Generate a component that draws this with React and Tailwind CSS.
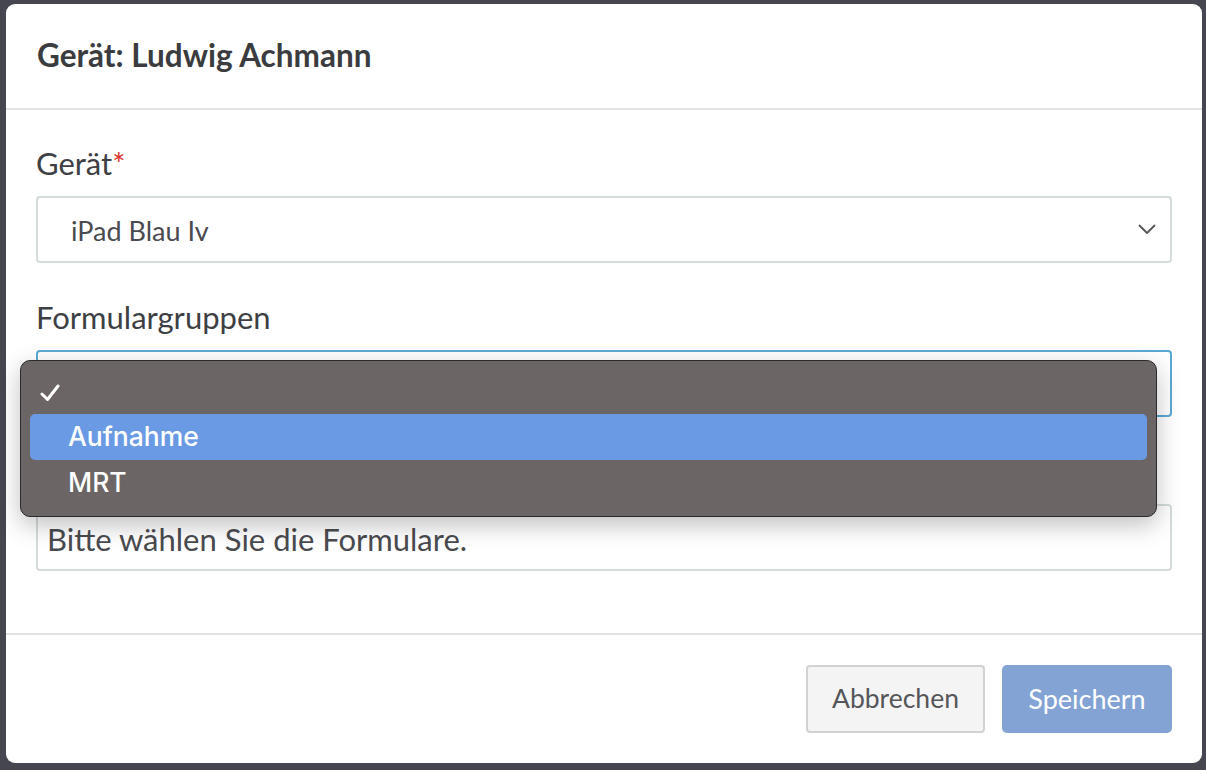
import React from "react";

const font = { fontFamily: '"Lato", "Noto Sans", sans-serif' };

function Chevron() {
  return (
    <svg width="18" height="11" viewBox="0 0 18 11" fill="none" stroke="#555" strokeWidth="1.8" strokeLinecap="round" strokeLinejoin="round">
      <path d="M1.5 1.5 L9 9 L16.5 1.5" />
    </svg>
  );
}

export default function App() {
  return (
    <div className="w-[1206px] h-[770px] bg-[#45464f] pt-[4px] pl-[6px] overflow-hidden" style={font}>
      <div className="relative w-[1196px] h-[759px] bg-white rounded-[9px] flex flex-col">
        <div className="h-[106px] flex items-center px-[31px] border-b-2 border-[#e3e3e3]">
          <h1 className="text-[31.5px] font-bold text-[#3b3c40]">Gerät: Ludwig Achmann</h1>
        </div>
        <div className="flex-1 px-[30px] pt-[34px] flex flex-col gap-[35px]">
          <div className="flex flex-col">
            <label className="text-[31px] leading-[39px] text-[#3d3f44] mb-[13px]">
              Gerät<span className="text-[#d9352b]">*</span>
            </label>
            <div className="h-[67px] border-2 border-[#d5dcdc] rounded-[4px] flex items-center justify-between pl-[33px] pr-[14px]">
              <span className="text-[27px] text-[#4a4b4f] pt-[3px]">iPad Blau Iv</span>
              <Chevron />
            </div>
          </div>
          <div className="flex flex-col">
            <label className="text-[31px] leading-[39px] text-[#3d3f44] mb-[13px]">Formulargruppen</label>
            <div className="h-[67px] border-2 border-[#5aa9d3] rounded-[4px] flex items-center justify-between pl-[33px] pr-[14px]">
              <span className="text-[27px] text-[#4a4b4f]"></span>
              <Chevron />
            </div>
          </div>
          <div className="flex flex-col">
            <div className="h-[39px] mb-[13px]"></div>
            <div className="h-[67px] border-2 border-[#d5dcdc] rounded-[4px] flex items-center pl-[9px] pr-[14px]">
              <span className="text-[31px] text-[#4a4b4f] pt-[3px]">Bitte wählen Sie die Formulare.</span>
            </div>
          </div>
        </div>
        <div className="h-[130px] border-t-2 border-[#e3e3e3] flex items-start justify-end gap-[17px] pt-[30px] pr-[30px]">
          <button className="w-[179px] h-[68px] bg-[#f5f4f4] border-2 border-[#d2d2d2] rounded-[4px] text-[26.5px] text-[#555659]">Abbrechen</button>
          <button className="w-[170px] h-[68px] bg-[#82a3d4] rounded-[5px] text-[27px] text-white">Speichern</button>
        </div>

        <div
          className="absolute left-[14px] top-[356px] w-[1137px] h-[157px] bg-[#6b6665] border border-[#2c2a2a] rounded-[10px] shadow-[0_8px_24px_rgba(0,0,0,0.25)] px-[9px] pt-[7px]"
          style={{ fontFamily: '"Inter", "Roboto", sans-serif' }}
        >
          <div className="h-[46px] flex items-center pl-[10px] text-white text-[24px] pt-[4px]">
            <svg width="20" height="18" viewBox="0 0 20 18" fill="none" stroke="white" strokeWidth="3" strokeLinecap="round" strokeLinejoin="round">
              <path d="M2 10 L7.5 15.5 L18 2" />
            </svg>
          </div>
          <div className="h-[46px] flex items-center pl-[38px] bg-[#6a9ae3] rounded-[5px] text-white text-[26.5px] font-medium">Aufnahme</div>
          <div className="h-[46px] flex items-center pl-[38px] text-white text-[26.5px] font-medium">MRT</div>
        </div>
      </div>
    </div>
  );
}
